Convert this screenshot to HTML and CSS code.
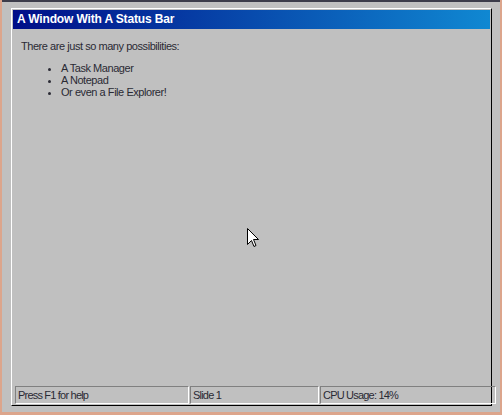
FILE: index.html
```html
<!DOCTYPE html>
<html lang="en">
<head>
    <meta charset="UTF-8">
    <title>A Window With A Status Bar</title>
    <link rel="stylesheet" href="styles.css">
</head>
<body>
    <div class="desktop">
        <div class="window">
            <div class="title-bar">A Window With A Status Bar</div>
            <div class="content">
                <p>There are just so many possibilities:</p>
                <ul>
                    <li>A Task Manager</li>
                    <li>A Notepad</li>
                    <li>Or even a File Explorer!</li>
                </ul>
            </div>
            <div class="status-bar">
                <div class="panel">Press F1 for help</div>
                <div class="panel">Slide 1</div>
                <div class="panel">CPU Usage: 14%</div>
            </div>
        </div>
        <svg class="cursor" width="13" height="20" viewBox="0 0 13 20">
            <path d="M0.5 0.5 V16.5 L4.5 12.5 L7 18.5 L9 17.5 L6.5 11.5 H11.5 Z" fill="#fff" stroke="#000" stroke-width="1" stroke-linejoin="miter"/>
        </svg>
    </div>
</body>
</html>
```

FILE: styles.css
```css
body {
    margin: 0;
    background-color: #dca58c;
    font-family: "Liberation Sans", Arial, sans-serif;
}
.desktop {
    position: relative;
    box-sizing: border-box;
    height: 412px;
    margin: 0 2px;
    padding: 6px 0 0 9px;
    background-color: #c0c0c0;
    border-top: 2px solid #3c3c4a;
}
.window {
    box-sizing: border-box;
    width: 481px;
    height: 398px;
    padding: 1px;
    display: flex;
    flex-direction: column;
    background-color: #c0c0c0;
    border: 1px solid;
    border-color: #fff #000 #000 #fff;
}
.title-bar {
    height: 19px;
    line-height: 19px;
    padding-left: 4px;
    color: #fff;
    font-weight: bold;
    font-size: 12px;
    letter-spacing: -0.15px;
    background: linear-gradient(to right, #000e88, #1088d2);
}
.content {
    flex: 1;
    padding: 11px 8px;
    color: #2a2a34;
    font-size: 11px;
    letter-spacing: -0.45px;
}
.content p {
    margin: 0 0 9px 0;
    line-height: 13px;
}
.content ul {
    margin: 0;
    padding-left: 40px;
    line-height: 12px;
}
.status-bar {
    display: grid;
    grid-template-columns: 174px 129px 176px;
    gap: 1px;
    padding-left: 2px;
    height: 18px;
}
.panel {
    box-sizing: border-box;
    height: 18px;
    line-height: 16px;
    padding-left: 2px;
    font-size: 11px;
    letter-spacing: -0.8px;
    color: #2a2a34;
    border: 1px solid;
    border-color: #808080 #fff #fff #808080;
    white-space: nowrap;
}
.cursor {
    position: absolute;
    left: 245px;
    top: 226px;
}
```
